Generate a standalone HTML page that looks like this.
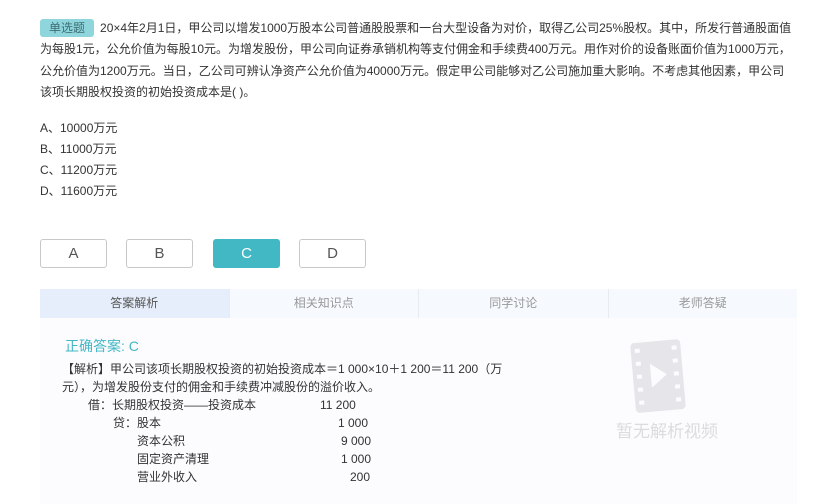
<!DOCTYPE html>
<html><head><meta charset="utf-8"><style>
body{margin:0;width:814px;height:504px;background:#fff;font-family:"Liberation Sans","Noto Sans CJK SC",sans-serif;color:#333;position:relative;overflow:hidden}
.q{position:absolute;left:40px;top:18px;width:752px;font-size:12px;line-height:21.3px}
.tag{display:inline-block;background:#8fd5dc;color:#3c6e74;border-radius:3px;padding:0 9px;line-height:18px;margin-right:6px}
.opts{position:absolute;left:40px;top:118px;font-size:12px;line-height:21px}
.btn{position:absolute;top:239px;width:65px;height:27px;border:1px solid #c8c8c8;border-radius:3px;text-align:center;line-height:27px;font-size:15px;color:#555}
.tabs{position:absolute;left:40px;top:289px;width:757px;height:29px;background:#f6f9fe;display:flex;font-size:12px;color:#999}
.tabs div{flex:1;text-align:center;line-height:29px;border-left:1px solid #e8ebf0}
.tabs div:first-child{background:#e6eefb;color:#555;border:none}
.panel{position:absolute;left:40px;top:318px;width:757px;height:186px;background:#fcfbfe}
.a{position:absolute;font-size:12px;color:#333;white-space:pre;line-height:18px}
</style></head><body>
<div class="q"><span class="tag">单选题</span>20×4年2月1日，甲公司以增发1000万股本公司普通股股票和一台大型设备为对价，取得乙公司25%股权。其中，所发行普通股面值为每股1元，公允价值为每股10元。为增发股份，甲公司向证券承销机构等支付佣金和手续费400万元。用作对价的设备账面价值为1000万元，公允价值为1200万元。当日，乙公司可辨认净资产公允价值为40000万元。假定甲公司能够对乙公司施加重大影响。不考虑其他因素，甲公司该项长期股权投资的初始投资成本是( )。</div>
<div class="opts">A、10000万元<br>B、11000万元<br>C、11200万元<br>D、11600万元</div>
<div class="btn" style="left:40px">A</div>
<div class="btn" style="left:126px">B</div>
<div class="btn" style="left:213px;background:#42b8c4;border-color:#42b8c4;color:#fff">C</div>
<div class="btn" style="left:299px">D</div>
<div class="tabs"><div>答案解析</div><div>相关知识点</div><div>同学讨论</div><div>老师答疑</div></div>
<div class="panel"></div>
<div class="a" style="left:65px;top:337px;font-size:14px;color:#42b8c4">正确答案: C</div>
<div class="a" style="left:62px;top:360px">【解析】甲公司该项长期股权投资的初始投资成本＝1 000×10＋1 200＝11 200（万</div>
<div class="a" style="left:62px;top:378px">元），为增发股份支付的佣金和手续费冲减股份的溢价收入。</div>
<div class="a" style="left:88px;top:396px">借：长期股权投资——投资成本</div><div class="a" style="left:320px;top:396px">11 200</div>
<div class="a" style="left:113px;top:414px">贷：股本</div><div class="a" style="left:338px;top:414px">1 000</div>
<div class="a" style="left:137px;top:432px">资本公积</div><div class="a" style="left:341px;top:432px">9 000</div>
<div class="a" style="left:137px;top:450px">固定资产清理</div><div class="a" style="left:341px;top:450px">1 000</div>
<div class="a" style="left:137px;top:468px">营业外收入</div><div class="a" style="left:350px;top:468px">200</div>
<svg style="position:absolute;left:628px;top:337px" width="62" height="78" viewBox="0 0 62 78">
<g transform="rotate(-5 31 39)"><rect x="5" y="4" width="50" height="70" rx="4" fill="#e6e6ea"/>
<g fill="#fcfbfe"><rect x="9" y="10" width="5" height="4"/><rect x="9" y="23" width="5" height="4"/><rect x="9" y="36" width="5" height="4"/><rect x="9" y="49" width="5" height="4"/><rect x="9" y="62" width="5" height="4"/>
<rect x="46" y="10" width="5" height="4"/><rect x="46" y="23" width="5" height="4"/><rect x="46" y="36" width="5" height="4"/><rect x="46" y="49" width="5" height="4"/><rect x="46" y="62" width="5" height="4"/>
<path d="M23 26 L39 38 L23 50 Z"/></g></g></svg>
<div class="a" style="left:616px;top:421px;font-size:17px;color:#dcdcdf;line-height:22px">暂无解析视频</div>
</body></html>
